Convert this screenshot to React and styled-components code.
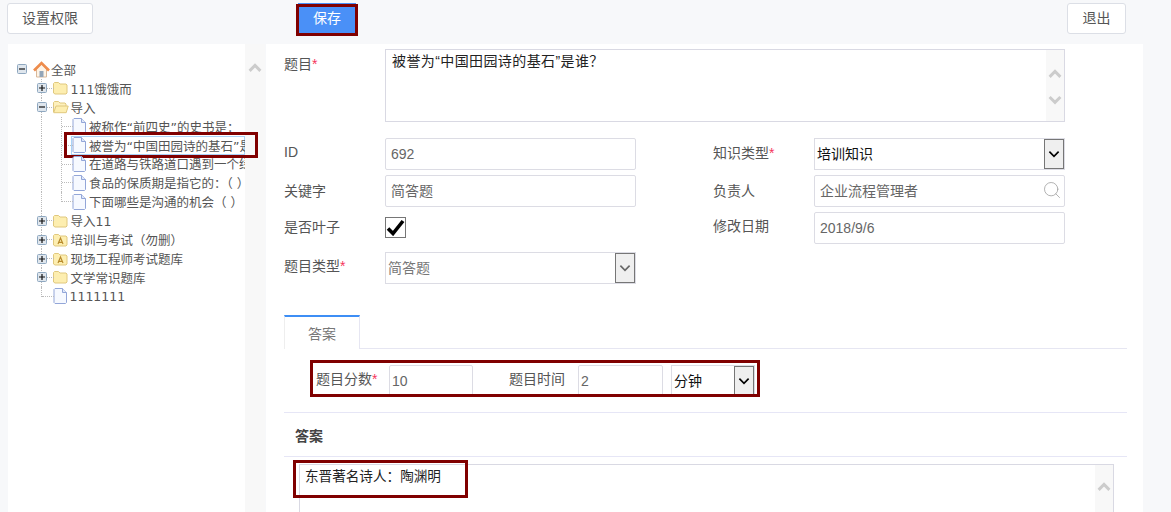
import React from 'react';
import styled, { createGlobalStyle } from 'styled-components';
import { Search } from 'lucide-react';

const GlobalStyle = createGlobalStyle`
  html, body {
    margin: 0;
    padding: 0;
    height: 512px;
    overflow: hidden;
    background: #f7f8fa;
    font-family: "Liberation Sans", "Noto Sans CJK SC", sans-serif;
    font-size: 14px;
    color: #555;
  }
  *, *::before, *::after { box-sizing: border-box; }
`;

const FRAME = '#800000';
const ROW = 18.92;

const Page = styled.div`
  display: flex;
  flex-direction: column;
  height: 512px;
  overflow: hidden;
`;

const Toolbar = styled.div`
  display: flex;
  align-items: flex-start;
  height: 44px;
  flex: none;
  padding: 3px 45px 0 7px;
`;

const Button = styled.button`
  height: 31px;
  width: ${p => p.$width}px;
  margin-left: ${p => p.$left || 0};
  border: 1px solid #dcdfe6;
  border-radius: 3px;
  background: #fff;
  color: #555;
  font: inherit;
  padding: 0 0 3px;
`;

const SaveButton = styled(Button)`
  position: relative;
  border: none;
  border-radius: 0;
  background: #4a90f7;
  color: #fff;
  &::after {
    content: '';
    position: absolute;
    top: 1px;
    left: -2px;
    right: -2px;
    bottom: -2px;
    border: 3px solid ${FRAME};
  }
`;

const Body = styled.div`
  display: flex;
  flex: 1;
  min-height: 0;
  padding-left: 8px;
`;

const Sidebar = styled.aside`
  display: flex;
  flex: none;
  width: 258px;
`;

const Tree = styled.div`
  width: 237px;
  background: #fff;
  padding-top: 16px;
  font-size: 12.5px;
  font-family: "DejaVu Sans", "Noto Sans CJK SC", sans-serif;
  color: #555;
`;

const Scroll = styled.div`
  display: flex;
  flex-direction: column;
  align-items: center;
  flex: none;
  width: ${p => p.$width || 18}px;
  padding-top: ${p => p.$top || 0}px;
  gap: ${p => p.$gap || 0}px;
  background: #f8f8f8;
`;

const TreeRow = styled.div`
  position: relative;
  display: flex;
  align-items: center;
  height: ${ROW}px;
  padding-left: ${p => 4.5 + (p.$indent || 0) * 19.5}px;
  &::after {
    content: ${p => (p.$framed ? "''" : 'none')};
    position: absolute;
    top: -4px;
    bottom: -3px;
    left: 56px;
    right: -13px;
    border: 3px solid ${FRAME};
  }
`;

const Cell = styled.span`
  position: relative;
  display: flex;
  align-items: center;
  justify-content: center;
  flex: none;
  width: 19.5px;
  height: ${ROW}px;
  &::before {
    content: ${p => (p.$v ? "''" : 'none')};
    position: absolute;
    left: 9px;
    top: 0;
    height: ${p => (p.$v === 'half' ? '10px' : '19px')};
    border-left: 1px dotted #bbb;
  }
  &::after {
    content: ${p => (p.$h ? "''" : 'none')};
    position: absolute;
    left: 10px;
    right: -2px;
    top: 9px;
    border-top: 1px dotted #bbb;
  }
`;

const Toggle = styled.span`
  position: relative;
  z-index: 1;
  display: flex;
  width: 10px;
  height: 10px;
`;

const NodeLabel = styled.span`
  display: flex;
  align-items: center;
  flex: 1;
  min-width: 0;
  height: ${ROW}px;
  padding-left: 1px;
  overflow: hidden;
  box-shadow: ${p => (p.$selected ? 'inset 0 0 0 1px #a9d2f7' : 'none')};
`;

const NodeIcon = styled.span`
  display: flex;
  flex: none;
  margin-right: ${p => p.$gap}px;
`;

const NodeText = styled.span`
  white-space: nowrap;
`;

const Main = styled.main`
  flex: none;
  width: 877px;
  background: #fff;
  padding: 5px 16px 0 18px;
`;

const QuestionRow = styled.div`
  display: flex;
  margin-bottom: 16px;
`;

const Label = styled.label`
  flex: none;
  width: ${p => p.$width || 101}px;
  margin-left: ${p => p.$left || 0}px;
  padding-top: ${p => p.$top ?? 4}px;
  color: #555;
  white-space: nowrap;
`;

const Star = styled.span`
  color: #f5365c;
`;

const Area = styled.div`
  display: flex;
  justify-content: space-between;
  width: 680px;
  height: 73px;
  border: 1px solid #d9d9e3;
  color: #222;
`;

const AreaText = styled.div`
  padding: 0 6px;
  letter-spacing: 0.4px;
`;

const FormGrid = styled.div`
  display: grid;
  grid-template-columns: 101px 251px 77px 101px 251px;
  grid-template-rows: 32px 32px 35px 32px;
  row-gap: 5px;
`;

const Field = styled.input`
  width: ${p => p.$width || 251}px;
  height: 32px;
  flex: none;
  border: 1px solid #dcdce4;
  border-radius: 2px;
  padding: 0 ${p => p.$pad ?? 5}px ${p => p.$lift || 0}px;
  font: inherit;
  color: #666;
  background: #fff;
  outline: none;
`;

const SearchField = styled.div`
  display: flex;
  align-items: center;
  justify-content: space-between;
  width: 251px;
  height: 32px;
  border: 1px solid #dcdce4;
  border-radius: 2px;
  padding: 0 2px 2px 5px;
  color: #666;
`;

const Select = styled.div`
  display: flex;
  align-items: stretch;
  flex: none;
  width: ${p => p.$width || 251}px;
  height: 32px;
  margin-left: ${p => p.$left || 0}px;
  border: 1px solid #dcdce4;
  color: ${p => (p.$muted ? '#777' : '#111')};
`;

const SelectText = styled.span`
  flex: 1;
  align-self: center;
  padding: 0 0 3px 2px;
`;

const SelectArrow = styled.span`
  display: flex;
  align-items: center;
  justify-content: center;
  flex: none;
  width: 20px;
  background: #efefef;
  border: 1px solid #767676;
`;

const CheckBox = styled.span`
  display: flex;
  align-items: center;
  justify-content: center;
  width: 21px;
  height: 21px;
  margin-top: 5px;
  border: 1px solid #767676;
  background: #fff;
`;

const Tabs = styled.div`
  display: flex;
  height: 34px;
  margin-top: 31px;
  border-bottom: 1px solid #e6e6f2;
`;

const Tab = styled.div`
  display: flex;
  align-items: center;
  justify-content: center;
  width: 76px;
  height: 34px;
  border-top: 2px solid #3d8ef5;
  border-left: 1px solid #eee;
  border-right: 1px solid #e6e6f2;
  background: #fff;
  color: #777;
`;

const ScoreRow = styled.div`
  display: flex;
  width: 450px;
  height: 37px;
  margin: 11px 0 15px 26px;
  padding: 2px 0 0 3px;
  border: 3px solid ${FRAME};
  overflow: hidden;
`;

const Section = styled.div`
  display: flex;
  align-items: center;
  height: 45px;
  padding-left: 11px;
  border-top: 1px solid #e6e6f6;
  border-bottom: 1px solid #e6e6f6;
  font-weight: bold;
  color: #444;
`;

const Editor = styled.div`
  position: relative;
  display: flex;
  justify-content: space-between;
  width: 815px;
  height: 90px;
  margin: 7px 0 0 15px;
  border: 1px solid #d9d9e3;
  color: #222;
  &::after {
    content: '';
    position: absolute;
    left: -7px;
    top: -5px;
    width: 175px;
    height: 38px;
    border: 3px solid ${FRAME};
  }
`;

const EditorText = styled.div`
  padding: 0 5px;
  font-size: 13.6px;
`;

const Chevron = ({ up, color = '#ccc', size = 14, width = 3 }) => (
  <svg width={size} height={size * 0.7} viewBox="0 0 14 10" fill="none">
    <path d={up ? 'M1.5 8 7 2.5 12.5 8' : 'M1.5 2 7 7.5 12.5 2'} stroke={color} strokeWidth={width} />
  </svg>
);

const ToggleIcon = ({ open }) => (
  <Toggle>
    <svg width="10" height="10" viewBox="0 0 10 10">
      <rect x="0.5" y="0.5" width="9" height="9" rx="1" fill="#dfe6ed" stroke="#8fa8c0" />
      <path d={open ? 'M2 5h6' : 'M2 5h6M5 2v6'} stroke="#111" strokeWidth="1.2" />
    </svg>
  </Toggle>
);

const HomeIcon = () => (
  <svg width="17" height="17" viewBox="0 0 17 17">
    <path d="M3.500 8 8.500 3l5 5v8h-10z" fill="#fdf3e6" stroke="#d9b89a" />
    <rect x="6.500" y="10" width="4" height="6" fill="#93a5b8" />
    <path d="M1 9.500 8.500 2 16 9.500" fill="none" stroke="#ee8c4c" strokeWidth="2.600" />
  </svg>
);

const FolderIcon = ({ letter }) => (
  <svg width="15" height="14" viewBox="0 0 15 14">
    <path d="M.5 12V2.5l1-1h4l1.5 1.5h6l1 1V12l-1 1h-11z" fill="#fdeeb0" stroke="#e0c87e" />
    {letter && <path d="M5 11 7.5 5 10 11M6 9.3h3" fill="none" stroke="#b88a2c" strokeWidth="1.2" />}
  </svg>
);

const OpenFolderIcon = () => (
  <svg width="16" height="14" viewBox="0 0 16 14">
    <path d="M.5 12V2.5l1-1h4l1.5 1.5h5l1 1V6" fill="#fdf0bd" stroke="#e0c87e" />
    <path d="M.7 12.7 3 6h12.2l-2 6.700z" fill="#fdeeb0" stroke="#e0c87e" />
  </svg>
);

const DocIcon = () => (
  <svg width="14" height="16" viewBox="0 0 14 16">
    <path d="M2 .5h7.500l4 4v10l-1 1H2l-1-1v-13z" fill="#f6f9ff" stroke="#93a6d8" />
    <path d="M9.500.5v4h4" fill="#dfe8fa" stroke="#93a6d8" />
  </svg>
);

const icons = {
  home: { node: <HomeIcon />, gap: 1 },
  folder: { node: <FolderIcon />, gap: 3 },
  letter: { node: <FolderIcon letter />, gap: 3 },
  open: { node: <OpenFolderIcon />, gap: 2 },
  doc: { node: <DocIcon />, gap: 3 },
};

const treeData = [
  { cells: [{ toggle: 'open' }], icon: 'home', text: '全部' },
  { indent: 1, cells: [{ v: 'full', h: true, toggle: 'plus' }], icon: 'folder', text: '111饿饿而' },
  { indent: 1, cells: [{ v: 'full', h: true, toggle: 'open' }], icon: 'open', text: '导入' },
  { indent: 1, cells: [{ v: 'full' }, { v: 'full', h: true }], icon: 'doc', text: '被称作“前四史”的史书是：' },
  { indent: 1, cells: [{ v: 'full' }, { v: 'full', h: true }], icon: 'doc', text: '被誉为“中国田园诗的基石”是谁？', selected: true },
  { indent: 1, cells: [{ v: 'full' }, { v: 'full', h: true }], icon: 'doc', text: '在道路与铁路道口遇到一个绿灯' },
  { indent: 1, cells: [{ v: 'full' }, { v: 'full', h: true }], icon: 'doc', text: '食品的保质期是指它的：（ ）' },
  { indent: 1, cells: [{ v: 'full' }, { v: 'half', h: true }], icon: 'doc', text: '下面哪些是沟通的机会（ ）' },
  { indent: 1, cells: [{ v: 'full', h: true, toggle: 'plus' }], icon: 'folder', text: '导入11' },
  { indent: 1, cells: [{ v: 'full', h: true, toggle: 'plus' }], icon: 'letter', text: '培训与考试（勿删）' },
  { indent: 1, cells: [{ v: 'full', h: true, toggle: 'plus' }], icon: 'letter', text: '现场工程师考试题库' },
  { indent: 1, cells: [{ v: 'full', h: true, toggle: 'plus' }], icon: 'folder', text: '文学常识题库' },
  { indent: 1, cells: [{ v: 'half', h: true }], icon: 'doc', text: '1111111' },
];

function TreeNode({ node }) {
  const icon = icons[node.icon];
  return (
    <TreeRow $indent={node.indent} $framed={node.selected}>
      {node.cells.map((cell, i) => (
        <Cell key={i} $v={cell.v} $h={cell.h}>
          {cell.toggle && <ToggleIcon open={cell.toggle === 'open'} />}
        </Cell>
      ))}
      <NodeLabel $selected={node.selected}>
        <NodeIcon $gap={icon.gap}>{icon.node}</NodeIcon>
        <NodeText>{node.text}</NodeText>
      </NodeLabel>
    </TreeRow>
  );
}

function Dropdown({ value, muted, width, left }) {
  return (
    <Select $muted={muted} $width={width} $left={left}>
      <SelectText>{value}</SelectText>
      <SelectArrow>
        <Chevron size={12} width={2} color={muted ? '#666' : '#000'} />
      </SelectArrow>
    </Select>
  );
}

export default function App() {
  return (
    <Page>
      <GlobalStyle />
      <Toolbar>
        <Button $width={86}>设置权限</Button>
        <SaveButton $width={58} $left="205px">保存</SaveButton>
        <Button $width={59} $left="auto">退出</Button>
      </Toolbar>
      <Body>
        <Sidebar>
          <Tree>
            {treeData.map((node, i) => (
              <TreeNode key={i} node={node} />
            ))}
          </Tree>
          <Scroll $width={20} $top={19}>
            <Chevron up />
          </Scroll>
        </Sidebar>
        <Main>
          <QuestionRow>
            <Label>题目<Star>*</Star></Label>
            <Area>
              <AreaText>被誉为“中国田园诗的基石”是谁？</AreaText>
              <Scroll $top={19} $gap={16}>
                <Chevron up />
                <Chevron />
              </Scroll>
            </Area>
          </QuestionRow>
          <FormGrid>
            <Label $top={6}>ID</Label>
            <Field readOnly value="692" />
            <span />
            <Label>知识类型<Star>*</Star></Label>
            <Dropdown value="培训知识" />

            <Label $top={5}>关键字</Label>
            <Field readOnly value="简答题" $lift={3} />
            <span />
            <Label $top={5}>负责人</Label>
            <SearchField>
              企业流程管理者
              <Search size={20} strokeWidth={0.9} color="#999" />
            </SearchField>

            <Label>是否叶子</Label>
            <CheckBox>
              <svg width="19" height="17" viewBox="0 0 19 17">
                <path d="M2 9.500 7 14.500 17 2" fill="none" stroke="#000" strokeWidth="3.600" />
              </svg>
            </CheckBox>
            <span />
            <Label $top={3}>修改日期</Label>
            <Field readOnly value="2018/9/6" />

            <Label $top={3}>题目类型<Star>*</Star></Label>
            <Dropdown value="简答题" muted />
          </FormGrid>
          <Tabs>
            <Tab>答案</Tab>
          </Tabs>
          <ScoreRow>
            <Label $width={73} $top={3}>题目分数<Star>*</Star></Label>
            <Field readOnly value="10" $width={84} $pad={2} />
            <Label $width={69} $top={3} $left={36}>题目时间</Label>
            <Field readOnly value="2" $width={85} $pad={2} />
            <Dropdown value="分钟" width={84} left={8} />
          </ScoreRow>
          <Section>答案</Section>
          <Editor>
            <EditorText>东晋著名诗人：陶渊明</EditorText>
            <Scroll $top={17}>
              <Chevron up />
            </Scroll>
          </Editor>
        </Main>
      </Body>
    </Page>
  );
}
